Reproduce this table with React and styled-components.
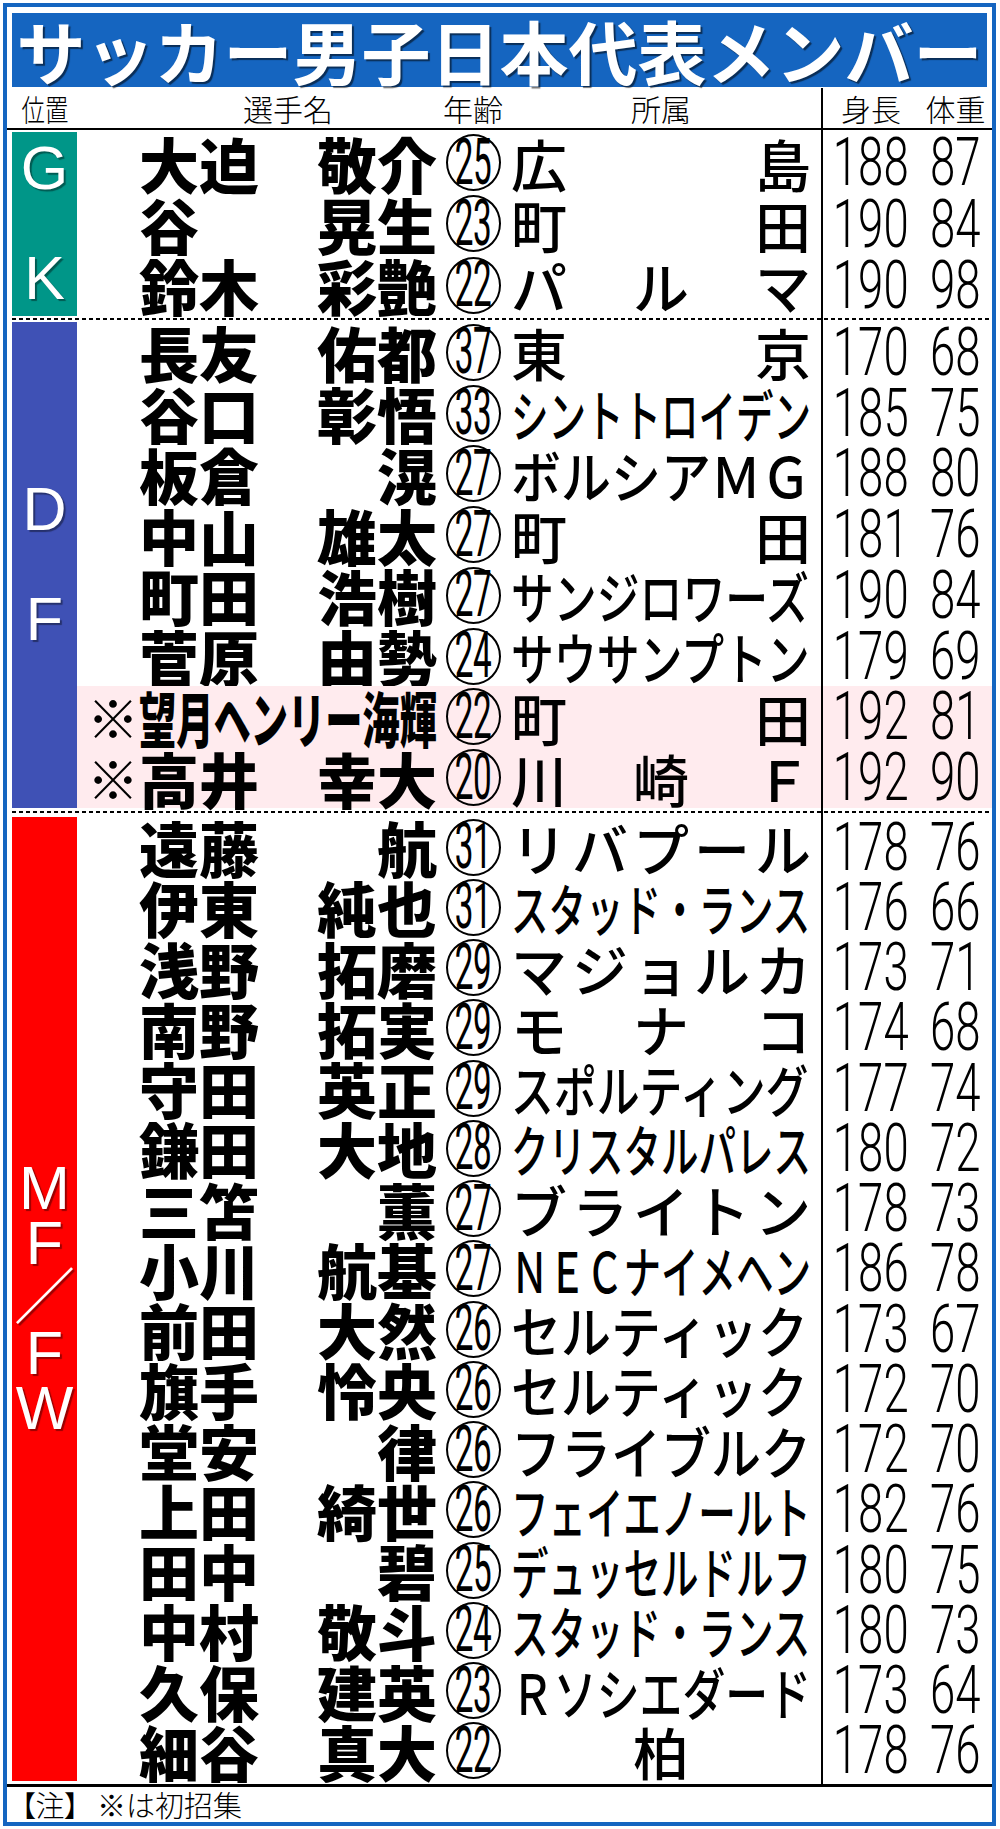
import styled, { createGlobalStyle } from 'styled-components';

const JP = `"Noto Sans CJK JP", "Noto Sans", sans-serif`;
const NUM = `Roboto, "Liberation Sans", sans-serif`;

const GlobalStyle = createGlobalStyle`
  html, body {
    margin: 0;
    padding: 0;
    background: #fff;
  }
  body {
    font-family: ${JP};
    color: #000;
  }
`;

const Frame = styled.div`
  box-sizing: border-box;
  width: 993px;
  margin: 3px 0 3px 3px;
  border: 4px solid #1565c0;
  background: #fff;
`;

const Title = styled.h1`
  margin: 6px 5px 1px;
  height: 74px;
  background: #1565c0;
  color: #fff;
  font: 700 69px/74px ${JP};
  text-align: center;
  white-space: nowrap;
  text-shadow: 2px 2px 1px rgba(0, 0, 0, 0.55);
`;

const Header = styled.div`
  display: flex;
  height: 40px;
  border-bottom: 2px solid #000;
`;

const HeadLeft = styled.div`
  display: flex;
  width: 814px;
  padding-left: 5px;
  box-sizing: border-box;
`;

const HeadRight = styled.div`
  display: flex;
  flex: 1;
  border-left: 2px solid #000;
`;

const Label = styled.div`
  flex-shrink: 0;
  width: ${(p) => p.$w}px;
  margin-left: ${(p) => p.$ml || 0}px;
  display: flex;
  align-items: center;
  justify-content: center;
  font: 300 30px/1 ${JP};
  white-space: nowrap;
  span {
    display: inline-block;
    transform: scaleX(${(p) => p.$sx || 1});
  }
`;

const Section = styled.div`
  display: flex;
  padding-left: 5px;
`;

const Bar = styled.div`
  flex-shrink: 0;
  width: 65px;
  background: ${(p) => p.$color};
  display: flex;
  flex-direction: column;
  align-items: center;
  justify-content: center;
  color: #fff;
  font: 400 61px/55px "Liberation Sans", ${JP};
  text-shadow: 2px 2px 1px rgba(0, 0, 0, 0.4);
`;

const BarLetter = styled.span`
  display: block;
  height: 55px;
`;

const Rows = styled.div`
  flex: 1;
  display: flex;
  flex-direction: column;
`;

const Row = styled.div`
  display: flex;
  height: ${(p) => p.$h}px;
  background: ${(p) => (p.$hl ? '#ffebee' : 'transparent')};
`;

const Mark = styled.div`
  flex-shrink: 0;
  width: 62px;
  display: flex;
  align-items: center;
  justify-content: flex-end;
  font: 900 52px/1 ${JP};
`;

const NameCell = styled.div`
  flex-shrink: 0;
  width: 298px;
  display: flex;
  align-items: center;
  justify-content: space-between;
  font: 900 60px/1 ${JP};
  white-space: nowrap;
`;

const Squeeze = styled.span`
  display: inline-block;
  white-space: nowrap;
  transform-origin: left center;
`;

const Age = styled.div`
  flex-shrink: 0;
  width: 56px;
  margin-left: 8px;
  display: flex;
  align-items: center;
  justify-content: center;
`;

const Circle = styled.span`
  box-sizing: border-box;
  width: 55px;
  height: 57px;
  border: 2px solid #000;
  border-radius: 50%;
  display: flex;
  align-items: center;
  justify-content: center;
  font: 400 64px/1 ${NUM};
  span {
    display: inline-block;
    transform: scaleX(0.52);
    letter-spacing: -1px;
  }
`;

const ClubCell = styled.div`
  flex-shrink: 0;
  width: 300px;
  margin: 0 10px;
  display: flex;
  align-items: center;
  justify-content: ${(p) => (p.$center ? 'center' : 'space-between')};
  font: 500 56px/1 ${JP};
  white-space: nowrap;
`;

const NumCell = styled.div`
  flex: 1;
  display: flex;
  border-left: 2px solid #000;
`;

const Num = styled.div`
  flex-shrink: 0;
  width: ${(p) => p.$w}px;
  display: flex;
  align-items: center;
  justify-content: center;
  font: 300 67px/1 ${NUM};
  span {
    display: inline-block;
    transform: scaleX(0.68);
  }
`;

const Sep = styled.div`
  display: flex;
  height: ${(p) => p.$h}px;
  padding-left: 5px;
  background-image: ${(p) =>
    p.$dashed
      ? 'repeating-linear-gradient(90deg, #000 0 4px, transparent 4px 7px)'
      : 'none'};
  background-size: 100% 2px;
  background-repeat: no-repeat;
  background-position: 0 50%;
  background-origin: content-box;
  background-clip: content-box;
`;

const SepLeft = styled.div`
  width: 809px;
  flex-shrink: 0;
`;

const SepRight = styled.div`
  flex: 1;
  border-left: 2px solid #000;
`;

const Footer = styled.div`
  height: 35px;
  border-top: 3px solid #000;
  display: flex;
  align-items: center;
  padding-left: 14px;
  font: 300 29px/1 ${JP};
  span {
    font-feature-settings: 'palt';
    margin-right: 18px;
  }
`;

const sections = [
  {
    color: '#009688',
    letters: ['G', '', 'K'],
    h: 61.33,
    players: [
      ['大迫', '敬介', 25, '広島', 188, 87],
      ['谷', '晃生', 23, '町田', 190, 84],
      ['鈴木', '彩艶', 22, 'パルマ', 190, 98],
    ],
  },
  {
    color: '#3f51b5',
    letters: ['D', '', 'F'],
    h: 60.75,
    players: [
      ['長友', '佑都', 37, '東京', 170, 68],
      ['谷口', '彰悟', 33, 'シントトロイデン', 185, 75],
      ['板倉', '滉', 27, 'ボルシアＭＧ', 188, 80],
      ['中山', '雄太', 27, '町田', 181, 76],
      ['町田', '浩樹', 27, 'サンジロワーズ', 190, 84],
      ['菅原', '由勢', 24, 'サウサンプトン', 179, 69],
      ['望月ヘンリー海輝', '', 22, '町田', 192, 81, true],
      ['高井', '幸大', 20, '川崎Ｆ', 192, 90, true],
    ],
  },
  {
    color: '#ff0000',
    letters: ['M', 'F', '／', 'F', 'W'],
    h: 60.25,
    players: [
      ['遠藤', '航', 31, 'リバプール', 178, 76],
      ['伊東', '純也', 31, 'スタッド・ランス', 176, 66],
      ['浅野', '拓磨', 29, 'マジョルカ', 173, 71],
      ['南野', '拓実', 29, 'モナコ', 174, 68],
      ['守田', '英正', 29, 'スポルティング', 177, 74],
      ['鎌田', '大地', 28, 'クリスタルパレス', 180, 72],
      ['三笘', '薫', 27, 'ブライトン', 178, 73],
      ['小川', '航基', 27, 'ＮＥＣナイメヘン', 186, 78],
      ['前田', '大然', 26, 'セルティック', 173, 67],
      ['旗手', '怜央', 26, 'セルティック', 172, 70],
      ['堂安', '律', 26, 'フライブルク', 172, 70],
      ['上田', '綺世', 26, 'フェイエノールト', 182, 76],
      ['田中', '碧', 25, 'デュッセルドルフ', 180, 75],
      ['中村', '敬斗', 24, 'スタッド・ランス', 180, 73],
      ['久保', '建英', 23, 'Ｒソシエダード', 173, 64],
      ['細谷', '真大', 22, '柏', 178, 76],
    ],
  },
];

const CLUB_SIZE = 56;

const fit = (text, width, size) => Math.min(1, width / ([...text].length * size));

const Name = ({ family, given }) => {
  if (!given) {
    return (
      <NameCell>
        <Squeeze style={{ transform: `scaleX(${fit(family, 298, 60)})` }}>{family}</Squeeze>
      </NameCell>
    );
  }
  return (
    <NameCell>
      <span>{family}</span>
      <span>{given}</span>
    </NameCell>
  );
};

const Club = ({ name }) => {
  const chars = [...name];
  if (chars.length === 1) return <ClubCell $center>{name}</ClubCell>;
  if (chars.length * CLUB_SIZE <= 300) {
    return (
      <ClubCell>
        {chars.map((c, i) => (
          <span key={i}>{c}</span>
        ))}
      </ClubCell>
    );
  }
  return (
    <ClubCell>
      <Squeeze style={{ transform: `scaleX(${fit(name, 300, CLUB_SIZE)})` }}>{name}</Squeeze>
    </ClubCell>
  );
};

const PlayerRow = ({ p, h }) => {
  const [family, given, age, club, height, weight, isNew] = p;
  return (
    <Row $h={h} $hl={isNew}>
      <Mark>{isNew ? '※' : ''}</Mark>
      <Name family={family} given={given} />
      <Age>
        <Circle>
          <span>{age}</span>
        </Circle>
      </Age>
      <Club name={club} />
      <NumCell>
        <Num $w={96}>
          <span>{height}</span>
        </Num>
        <Num $w={73}>
          <span>{weight}</span>
        </Num>
      </NumCell>
    </Row>
  );
};

const Separator = ({ h, dashed }) => (
  <Sep $h={h} $dashed={dashed}>
    <SepLeft />
    <SepRight />
  </Sep>
);

const App = () => {
  return (
    <>
      <GlobalStyle />
      <Frame>
        <Title>サッカー男子日本代表メンバー</Title>
        <Header>
          <HeadLeft>
            <Label $w={65} $sx={0.78}>
              <span>位置</span>
            </Label>
            <Label $w={298} $ml={62}>
              <span>選手名</span>
            </Label>
            <Label $w={56} $ml={8}>
              <span>年齢</span>
            </Label>
            <Label $w={300} $ml={10}>
              <span>所属</span>
            </Label>
          </HeadLeft>
          <HeadRight>
            <Label $w={96}>
              <span>身長</span>
            </Label>
            <Label $w={73}>
              <span>体重</span>
            </Label>
          </HeadRight>
        </Header>
        <Separator h={2} />
        {sections.map((s, i) => (
          <div key={i}>
            {i > 0 && <Separator h={i === 1 ? 6 : 9} dashed />}
            <Section>
              <Bar $color={s.color}>
                {s.letters.map((l, j) => (
                  <BarLetter key={j}>{l}</BarLetter>
                ))}
              </Bar>
              <Rows>
                {s.players.map((p, j) => (
                  <PlayerRow key={j} p={p} h={s.h} />
                ))}
              </Rows>
            </Section>
          </div>
        ))}
        <Separator h={3} />
        <Footer>
          <span>【注】</span>※は初招集
        </Footer>
      </Frame>
    </>
  );
};

export default App;
